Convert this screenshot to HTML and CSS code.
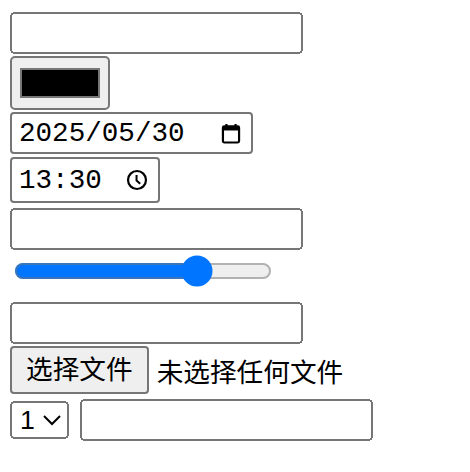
FILE: index.html
```html
<!DOCTYPE html>
<html lang="zh-CN">
<head>
    <meta charset="UTF-8">
    <title>表单控件</title>
    <link rel="stylesheet" href="styles.css">
</head>
<body>
    <div class="page">
        <input type="text" class="field first">
        <input type="color" class="swatch" value="#000000">
        <span class="fake dateField">
            <span class="value">2025/05/30</span>
            <svg class="icon" viewBox="0 0 24 24" width="11" height="11.5">
                <path d="M7 1.5v4M17 1.5v4" stroke="#000" stroke-width="2.4" fill="none"/>
                <rect x="3.2" y="4.2" width="17.6" height="17.6" rx="1.5" stroke="#000" stroke-width="2.4" fill="none"/>
                <rect x="3.2" y="4.2" width="17.6" height="4.5" fill="#000"/>
            </svg>
        </span>
        <span class="fake timeField">
            <span class="value">13:30</span>
            <svg class="icon" viewBox="0 0 24 24" width="11" height="11">
                <circle cx="12" cy="12" r="9.8" stroke="#000" stroke-width="2.4" fill="none"/>
                <path d="M11.5 6.5v6l4 3.5" stroke="#000" stroke-width="2.2" fill="none"/>
            </svg>
        </span>
        <input type="text" class="field">
        <input type="range" class="slider" value="74">
        <input type="text" class="field">
        <div class="fileField">
            <button class="fileButton">选择文件</button>
            <span class="fileName">未选择任何文件</span>
        </div>
        <div class="lastRow">
            <select class="picker">
                <option>1</option>
                <option>2</option>
            </select>
            <input type="text" class="field">
        </div>
    </div>
</body>
</html>
```

FILE: styles.css
```css
body {
    margin: 10px;
    font-family: "Liberation Serif", serif;
}

/* the whole form is drawn at double size */
.page {
    zoom: 2;
    display: flex;
    flex-direction: column;
    align-items: flex-start;
}

.field,
.picker,
.fileButton,
.fileName {
    font-family: "Liberation Sans", "Noto Sans CJK SC", sans-serif;
    font-size: 13.333px;
}

.field {
    box-sizing: border-box;
    width: 146.5px;
    height: 21px;
    margin: 2.5px 0 0 0;
}

.field.first {
    margin-top: 1px;
}

.swatch {
    margin: 1px 0 0 0;
}

.fake {
    display: flex;
    align-items: center;
    box-sizing: border-box;
    height: 21px;
    border: 1px solid #767676;
    border-radius: 2px;
    padding: 0 4.5px 0 3.5px;
    font-family: "Liberation Mono", monospace;
    font-size: 13.8px;
    background: #fff;
}

.dateField {
    width: 121.5px;
    margin-top: 1px;
    justify-content: space-between;
}

.timeField {
    width: 75px;
    height: 23px;
    margin-top: 1.5px;
    gap: 12px;
}

.icon {
    flex: none;
}

.slider {
    margin: 2.5px 2px 5px 2px;
}

.fileField {
    display: flex;
    align-items: center;
    margin-top: 1px;
}

.fileButton {
    background: #efefef;
    border: 1px solid #767676;
    border-radius: 2px;
    padding: 1px 7px;
    line-height: 20px;
    margin: 0 4px 0 0;
    color: #000;
}

.lastRow {
    display: flex;
    align-items: center;
    gap: 5.5px;
    margin-top: 2.5px;
}

.lastRow .field {
    margin: 0;
}

.picker {
    margin: 0;
}
```
